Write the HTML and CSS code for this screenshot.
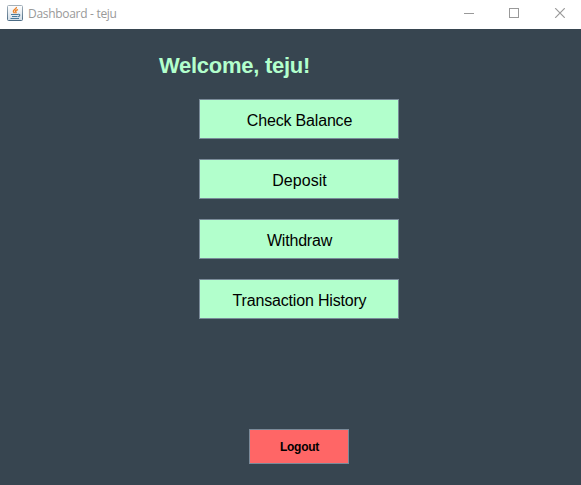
FILE: index.html
```html
<!DOCTYPE html>
<html lang="en">
<head>
<meta charset="utf-8">
<title>Dashboard - teju</title>
<link rel="stylesheet" href="styles.css">
</head>
<body>
<header class="titlebar">
  <svg class="app-icon" width="16" height="16" viewBox="0 0 16 16">
    <defs>
      <linearGradient id="tile" x1="0" y1="0" x2="0" y2="1"><stop offset="0" stop-color="#ffffff"/><stop offset="1" stop-color="#d3dee7"/></linearGradient>
      <linearGradient id="edge" x1="0" y1="0" x2="0" y2="1"><stop offset="0" stop-color="#a3b0ba"/><stop offset="1" stop-color="#4c6c85"/></linearGradient>
    </defs>
    <rect x=".5" y=".5" width="15" height="15" rx="1" fill="url(#tile)" stroke="url(#edge)"/>
    <path d="M9.4 2c.5 2-3.6 2.600-3 4.600.2.700.8 1 1.100 1.600M11 4.600C8.900 5.200 8 5.900 8.800 6.700c.5.600.2 1.100-.3 1.500" fill="none" stroke="#ec8126" stroke-width="1.400"/>
    <path d="M4 9.500h7M5 11.500h5.500M11 9.300c2.500-.5 2.300 1.900.1 2.400M3.500 13.500h8.500" fill="none" stroke="#4a7a9b" stroke-width="1.100"/>
  </svg>
  <span class="window-title">Dashboard - teju</span>
  <svg class="window-controls" width="101" height="10" viewBox="0 0 101 10" fill="none" stroke="#999999">
    <path d="M0 5.500H10"/>
    <rect x="45.500" y=".5" width="9" height="9"/>
    <path d="M91.200.2l9.600 9.600M100.800.2l-9.600 9.600" stroke-width="1.200"/>
  </svg>
</header>
<main class="dashboard">
  <h1 class="welcome">Welcome, teju!</h1>
  <nav class="actions">
    <button class="action">Check Balance</button>
    <button class="action deposit">Deposit</button>
    <button class="action">Withdraw</button>
    <button class="action">Transaction History</button>
  </nav>
  <button class="logout">Logout</button>
</main>
</body>
</html>
```
FILE: styles.css
```css
* { box-sizing: border-box; }
body {
  margin: 0;
  width: 581px;
  height: 485px;
  overflow: hidden;
  background: #374550;
  font-family: "Liberation Sans", Arial, sans-serif;
}
.titlebar {
  display: flex;
  align-items: center;
  height: 29px;
  padding: 0 16px 3px 7px;
  background: #ffffff;
}
.app-icon { display: block; }
.window-title {
  margin-left: 5px;
  padding-top: 2px;
  font: 12px/16px "Open Sans", "Noto Sans", sans-serif;
  letter-spacing: -0.3px;
  color: #999999;
}
.window-controls { display: block; margin-left: auto; }
.dashboard { padding: 20px 0 0 159px; }
.welcome {
  margin: 0;
  height: 30px;
  font-size: 22px;
  line-height: 33px;
  font-weight: bold;
  letter-spacing: -0.28px;
  color: #b2ffcc;
  white-space: nowrap;
}
.actions {
  display: flex;
  flex-direction: column;
  gap: 20px;
  width: 200px;
  margin: 20px 0 0 40px;
}
.action, .logout {
  display: block;
  border: 1px solid #7a8a99;
  border-radius: 0;
  color: #000000;
  font-family: inherit;
}
.action {
  height: 40px;
  padding: 3px 0 0 1px;
  background: #b2ffcc;
  font-size: 16px;
  line-height: 18px;
  letter-spacing: -0.18px;
}
.deposit { letter-spacing: 0.05px; }
.logout {
  width: 100px;
  height: 35px;
  margin: 110px 0 0 90px;
  padding: 1px 0 0 1px;
  background: #ff6666;
  font-size: 12px;
  font-weight: bold;
  letter-spacing: -0.25px;
}
```
